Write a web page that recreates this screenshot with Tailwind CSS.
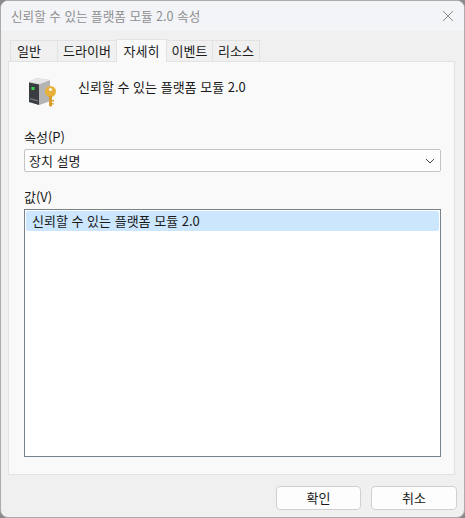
<!doctype html>
<html lang="ko">
<head>
  <meta charset="utf-8">
  <title>신뢰할 수 있는 플랫폼 모듈 2.0 속성</title>
  <script src="https://cdn.jsdelivr.net/npm/@tailwindcss/browser@4"></script>
</head>

<body class="bg-[#8a8a8a] overflow-hidden">
  <div class="w-[465px] h-[518px] flex flex-col bg-[#f0f0f0] border border-[#ababab] rounded-lg overflow-hidden text-[13px] text-[#1a1a1a] font-['Noto_Sans_CJK_KR','Noto_Sans',sans-serif]">

    <!-- title bar -->
    <div class="h-[30px] shrink-0 bg-[#f3f4f8] flex items-center justify-between pl-[10px] pr-[10px]">
      <span class="text-[12.6px] text-[#8f8f8f]">신뢰할 수 있는 플랫폼 모듈 2.0 속성</span>
      <svg class="w-[12px] h-[12px]" viewBox="0 0 12 12" fill="none" stroke="#8a8a8a" stroke-width="1"><path d="M1 1 L11 11 M11 1 L1 11"/></svg>
    </div>

    <!-- tabs -->
    <div class="h-[30px] shrink-0 flex items-end pl-[9px] relative z-10">
      <div class="w-[48px] h-[21px] flex items-center pl-[6px] bg-[#f0f0f0] border border-b-0 border-[#e2e2e2]">일반</div>
      <div class="w-[59px] h-[21px] flex items-center justify-center bg-[#f0f0f0] border border-l-0 border-b-0 border-[#e2e2e2]">드라이버</div>
      <div class="w-[50px] h-[23px] -mb-px flex items-center justify-center bg-[#f9f9f9] border border-l-0 border-b-0 border-[#e2e2e2]">자세히</div>
      <div class="w-[46px] h-[21px] flex items-center justify-center bg-[#f0f0f0] border border-l-0 border-b-0 border-[#e2e2e2]">이벤트</div>
      <div class="w-[47px] h-[21px] flex items-center justify-center bg-[#f0f0f0] border border-l-0 border-b-0 border-[#e2e2e2]">리소스</div>
    </div>

    <!-- panel -->
    <div class="mx-[7px] w-[447px] h-[414px] shrink-0 bg-[#f9f9f9] border border-[#e2e2e2] pl-[15px] flex flex-col">
      <div class="h-[65px] shrink-0 flex items-start gap-[22px] pl-[4px] pt-[15px]">
        <!-- tpm device + key -->
        <svg class="w-[28px] h-[30px]" viewBox="0 0 28 30">
          <path d="M1 5 L8 1 L22 3 L22 24 L11 28 L1 25 Z" fill="#c9c9c9"/>
          <path d="M1 5 L8 1 L22 3 L12 7 Z" fill="#e6e6e6"/>
          <path d="M1 5.5 L11 7.5 L11 28 L1 25 Z" fill="#3a3d40"/>
          <path d="M11 7.5 L22 3.5 L22 24 L11 28 Z" fill="#b4b4b4"/>
          <rect x="3.5" y="10" width="3" height="3" fill="#35d24a"/>
          <path d="M2 21 L10 23 L10 24.5 L2 22.5 Z" fill="#70757a"/>
          <circle cx="22.5" cy="14.5" r="5.5" fill="#e8b13c"/>
          <circle cx="22.5" cy="12.5" r="1.5" fill="#f9f9f9"/>
          <path d="M21 19 L24 19 L24 28.5 L22.5 30 L21 28.5 Z" fill="#d99f2e"/>
          <rect x="24" y="23" width="2" height="1.5" fill="#d99f2e"/>
          <rect x="24" y="26" width="1.5" height="1.5" fill="#d99f2e"/>
        </svg>
        <span class="leading-[20px]">신뢰할 수 있는 플랫폼 모듈 2.0</span>
      </div>

      <div class="h-[20px] flex items-center">속성(P)</div>
      <div class="mt-[2px] w-[417px] h-[23px] shrink-0 flex items-center justify-between pl-[4px] pr-[5px] bg-[#fdfdfd] border border-[#c4c4c4] rounded-[2px]">
        <span>장치 설명</span>
        <svg class="w-[10px] h-[6px]" viewBox="0 0 10 6" fill="none" stroke="#444" stroke-width="1"><path d="M1 1 L5 5 L9 1"/></svg>
      </div>

      <div class="mt-[15px] h-[20px] flex items-center">값(V)</div>
      <div class="mt-[2px] w-[417px] h-[248px] shrink-0 bg-white border border-[#7a8289] p-[1px]">
        <div class="h-[20px] bg-[#cbe6fd] rounded-[2px] flex items-center pl-[6px]">신뢰할 수 있는 플랫폼 모듈 2.0</div>
      </div>
    </div>

    <!-- buttons -->
    <div class="flex justify-end gap-[10px] pt-[11px] pr-[7px]">
      <button class="w-[85px] h-[24px] flex items-center justify-center bg-[#fdfdfd] border border-[#d0d0d0] rounded-[4px]">확인</button>
      <button class="w-[86px] h-[24px] flex items-center justify-center bg-[#fdfdfd] border border-[#d0d0d0] rounded-[4px]">취소</button>
    </div>
  </div>
</body>
</html>
